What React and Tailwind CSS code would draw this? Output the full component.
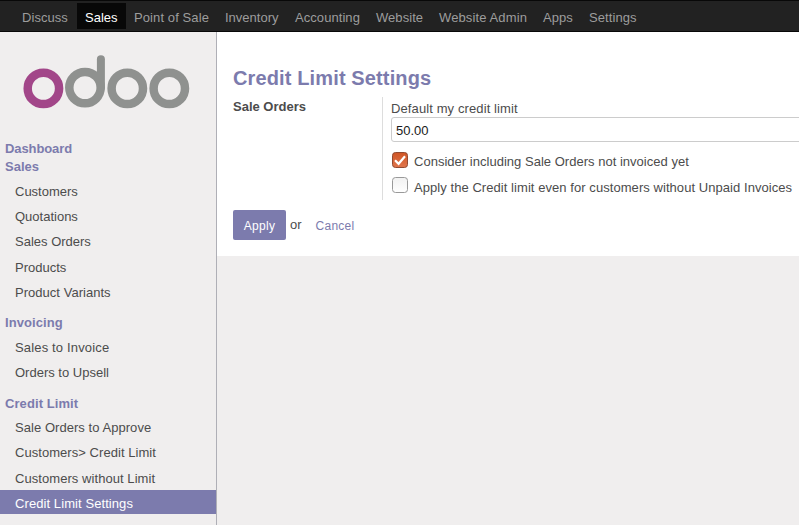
const nav = [
  ['Discuss', 'w-[63px] tracking-[0.06px]'],
  ['Sales', 'w-[49px]'],
  ['Point of Sale', 'w-[91px] tracking-[0.1px]'],
  ['Inventory', 'w-[70px]'],
  ['Accounting', 'w-[81px] tracking-[0.06px]'],
  ['Website', 'w-[63px] tracking-[0.05px]'],
  ['Website Admin', 'w-[104px] tracking-[0.12px]'],
  ['Apps', 'w-[46px]'],
  ['Settings', 'w-[64px] tracking-[0.08px]'],
];

const sections = [
  { title: 'Dashboard', box: 'h-[18px] tracking-[-0.1px]', list: '', items: [] },
  {
    title: 'Sales',
    box: 'mb-[11.2px]',
    list: 'pt-[2px]',
    items: [
      ['Customers', ''],
      ['Quotations', ''],
      ['Sales Orders', ''],
      ['Products', ''],
      ['Product Variants', 'tracking-[0.03px]'],
    ],
  },
  {
    title: 'Invoicing',
    box: 'mb-[12px] tracking-[0.08px]',
    list: 'pt-[2px]',
    items: [
      ['Sales to Invoice', 'tracking-[0.16px]'],
      ['Orders to Upsell', 'tracking-[0px]'],
    ],
  },
  {
    title: 'Credit Limit',
    box: 'tracking-[0.08px]',
    list: 'pt-px',
    items: [
      ['Sale Orders to Approve', 'tracking-[0.05px]'],
      ['Customers> Credit Limit', 'tracking-[0.05px]'],
      ['Customers without Limit', 'tracking-[0.06px]'],
      ['Credit Limit Settings', 'tracking-[0.08px]'],
    ],
  },
];

function Logo() {
  return (
    <svg className="ml-[22px] mt-[22px] block" width="170" height="56" viewBox="22 54 170 56" fill="none" strokeWidth="8.5">
      <circle cx="43.4" cy="88.4" r="15.7" stroke="#a24689" />
      <g stroke="#8f918f">
        <circle cx="85" cy="87.6" r="15.7" />
        <path d="M100.9 59.3V87.6" strokeLinecap="round" strokeWidth="8" />
        <circle cx="127.3" cy="88.4" r="15.7" />
        <circle cx="169.3" cy="88.4" r="15.7" />
      </g>
    </svg>
  );
}

function Check({ checked }) {
  return (
    <svg className="mr-[5px] block shrink-0" width="17" height="17" viewBox="0 0 17 17" fill="none">
      <defs>
        <linearGradient id="on" x1="0" y1="0" x2="0" y2="1">
          <stop offset="0" stopColor="#cf5525" />
          <stop offset="1" stopColor="#e0764d" />
        </linearGradient>
        <linearGradient id="off" x1="0" y1="0" x2="0" y2="1">
          <stop offset="0" stopColor="#f1f1f1" />
          <stop offset="1" stopColor="#ffffff" />
        </linearGradient>
      </defs>
      <rect x="0.5" y="0.5" width="15" height="15" rx="3" fill={checked ? 'url(#on)' : 'url(#off)'} stroke={checked ? '#914a31' : '#999'} />
      {checked && <path d="M3 8.2L6.6 11.8L13 4.2" stroke="#fff" strokeWidth="2.2" />}
    </svg>
  );
}

export default function App() {
  return (
    <div className="flex h-[525px] w-[799px] flex-col overflow-hidden bg-[#f0eeee] font-['Liberation_Sans',Arial,sans-serif] text-[13px] leading-[18px] text-[#4c4c4c]">
      <nav className="flex h-8 shrink-0 border-y border-[#080808] bg-[#222] pl-[14px] pt-[2px] text-[#9d9d9d]">
        {nav.map(([label, fit]) => (
          <a
            key={label}
            className={`${fit} block h-[26px] shrink-0 whitespace-nowrap pl-2 leading-[30px] ${label === 'Sales' ? 'bg-[#080808] text-white' : ''}`}
          >
            {label}
          </a>
        ))}
      </nav>
      <div className="flex min-h-0 flex-1">
        <aside className="w-[217px] shrink-0 border-r border-[#afafb6]">
          <Logo />
          <div className="pt-[30px]">
            {sections.map((s) => (
              <section key={s.title} className={s.box}>
                <h2 className="pl-[5px] font-bold text-[#7c7bad]">{s.title}</h2>
                {s.items.length > 0 && (
                  <ul className={s.list}>
                    {s.items.map(([item, fit]) => (
                      <li
                        key={item}
                        className={`${fit} mb-[1.2px] h-6 whitespace-nowrap pl-[15px] leading-[28px] ${item === 'Credit Limit Settings' ? 'bg-[#7c7bad] text-white' : ''}`}
                      >
                        {item}
                      </li>
                    ))}
                  </ul>
                )}
              </section>
            ))}
          </div>
        </aside>
        <main className="h-[224px] min-w-0 flex-1 overflow-hidden bg-white pl-4 pt-[34px]">
          <h1 className="text-[20px] font-bold leading-[24px] tracking-[0.13px] text-[#7c7bad]">Credit Limit Settings</h1>
          <div className="mt-[7px] flex h-[103px]">
            <div className="w-[149px] shrink-0 font-bold leading-[20px]">Sale Orders</div>
            <div className="shrink-0 border-l border-[#ddd] pl-2 pt-[2px]">
              <label className="block h-[18px] leading-[20px] tracking-[0.11px]">Default my credit limit</label>
              <div className="h-[25px] w-[430px] rounded-[3px] border border-[#ccc] pl-1 leading-[25px] text-[#1a1a1a]">50.00</div>
              <label className="mt-[10px] flex h-[18px] whitespace-nowrap pl-px">
                <Check checked />
                <span className="leading-[20px] tracking-[0.02px]">Consider including Sale Orders not invoiced yet</span>
              </label>
              <label className="mt-[7px] flex h-[18px] whitespace-nowrap pl-px">
                <Check />
                <span className="leading-[22px] tracking-[0.06px]">Apply the Credit limit even for customers without Unpaid Invoices</span>
              </label>
            </div>
          </div>
          <div className="mt-[10px] flex">
            <button className="h-[30px] w-[53px] rounded-[2px] bg-[#7c7bad] text-[12px] leading-[32px] tracking-[0.25px] text-white">Apply</button>
            <span className="ml-1 leading-[30px]">or</span>
            <a className="ml-[14px] text-[12px] leading-[32px] tracking-[0.25px] text-[#7c7bad]">Cancel</a>
          </div>
        </main>
      </div>
    </div>
  );
}
